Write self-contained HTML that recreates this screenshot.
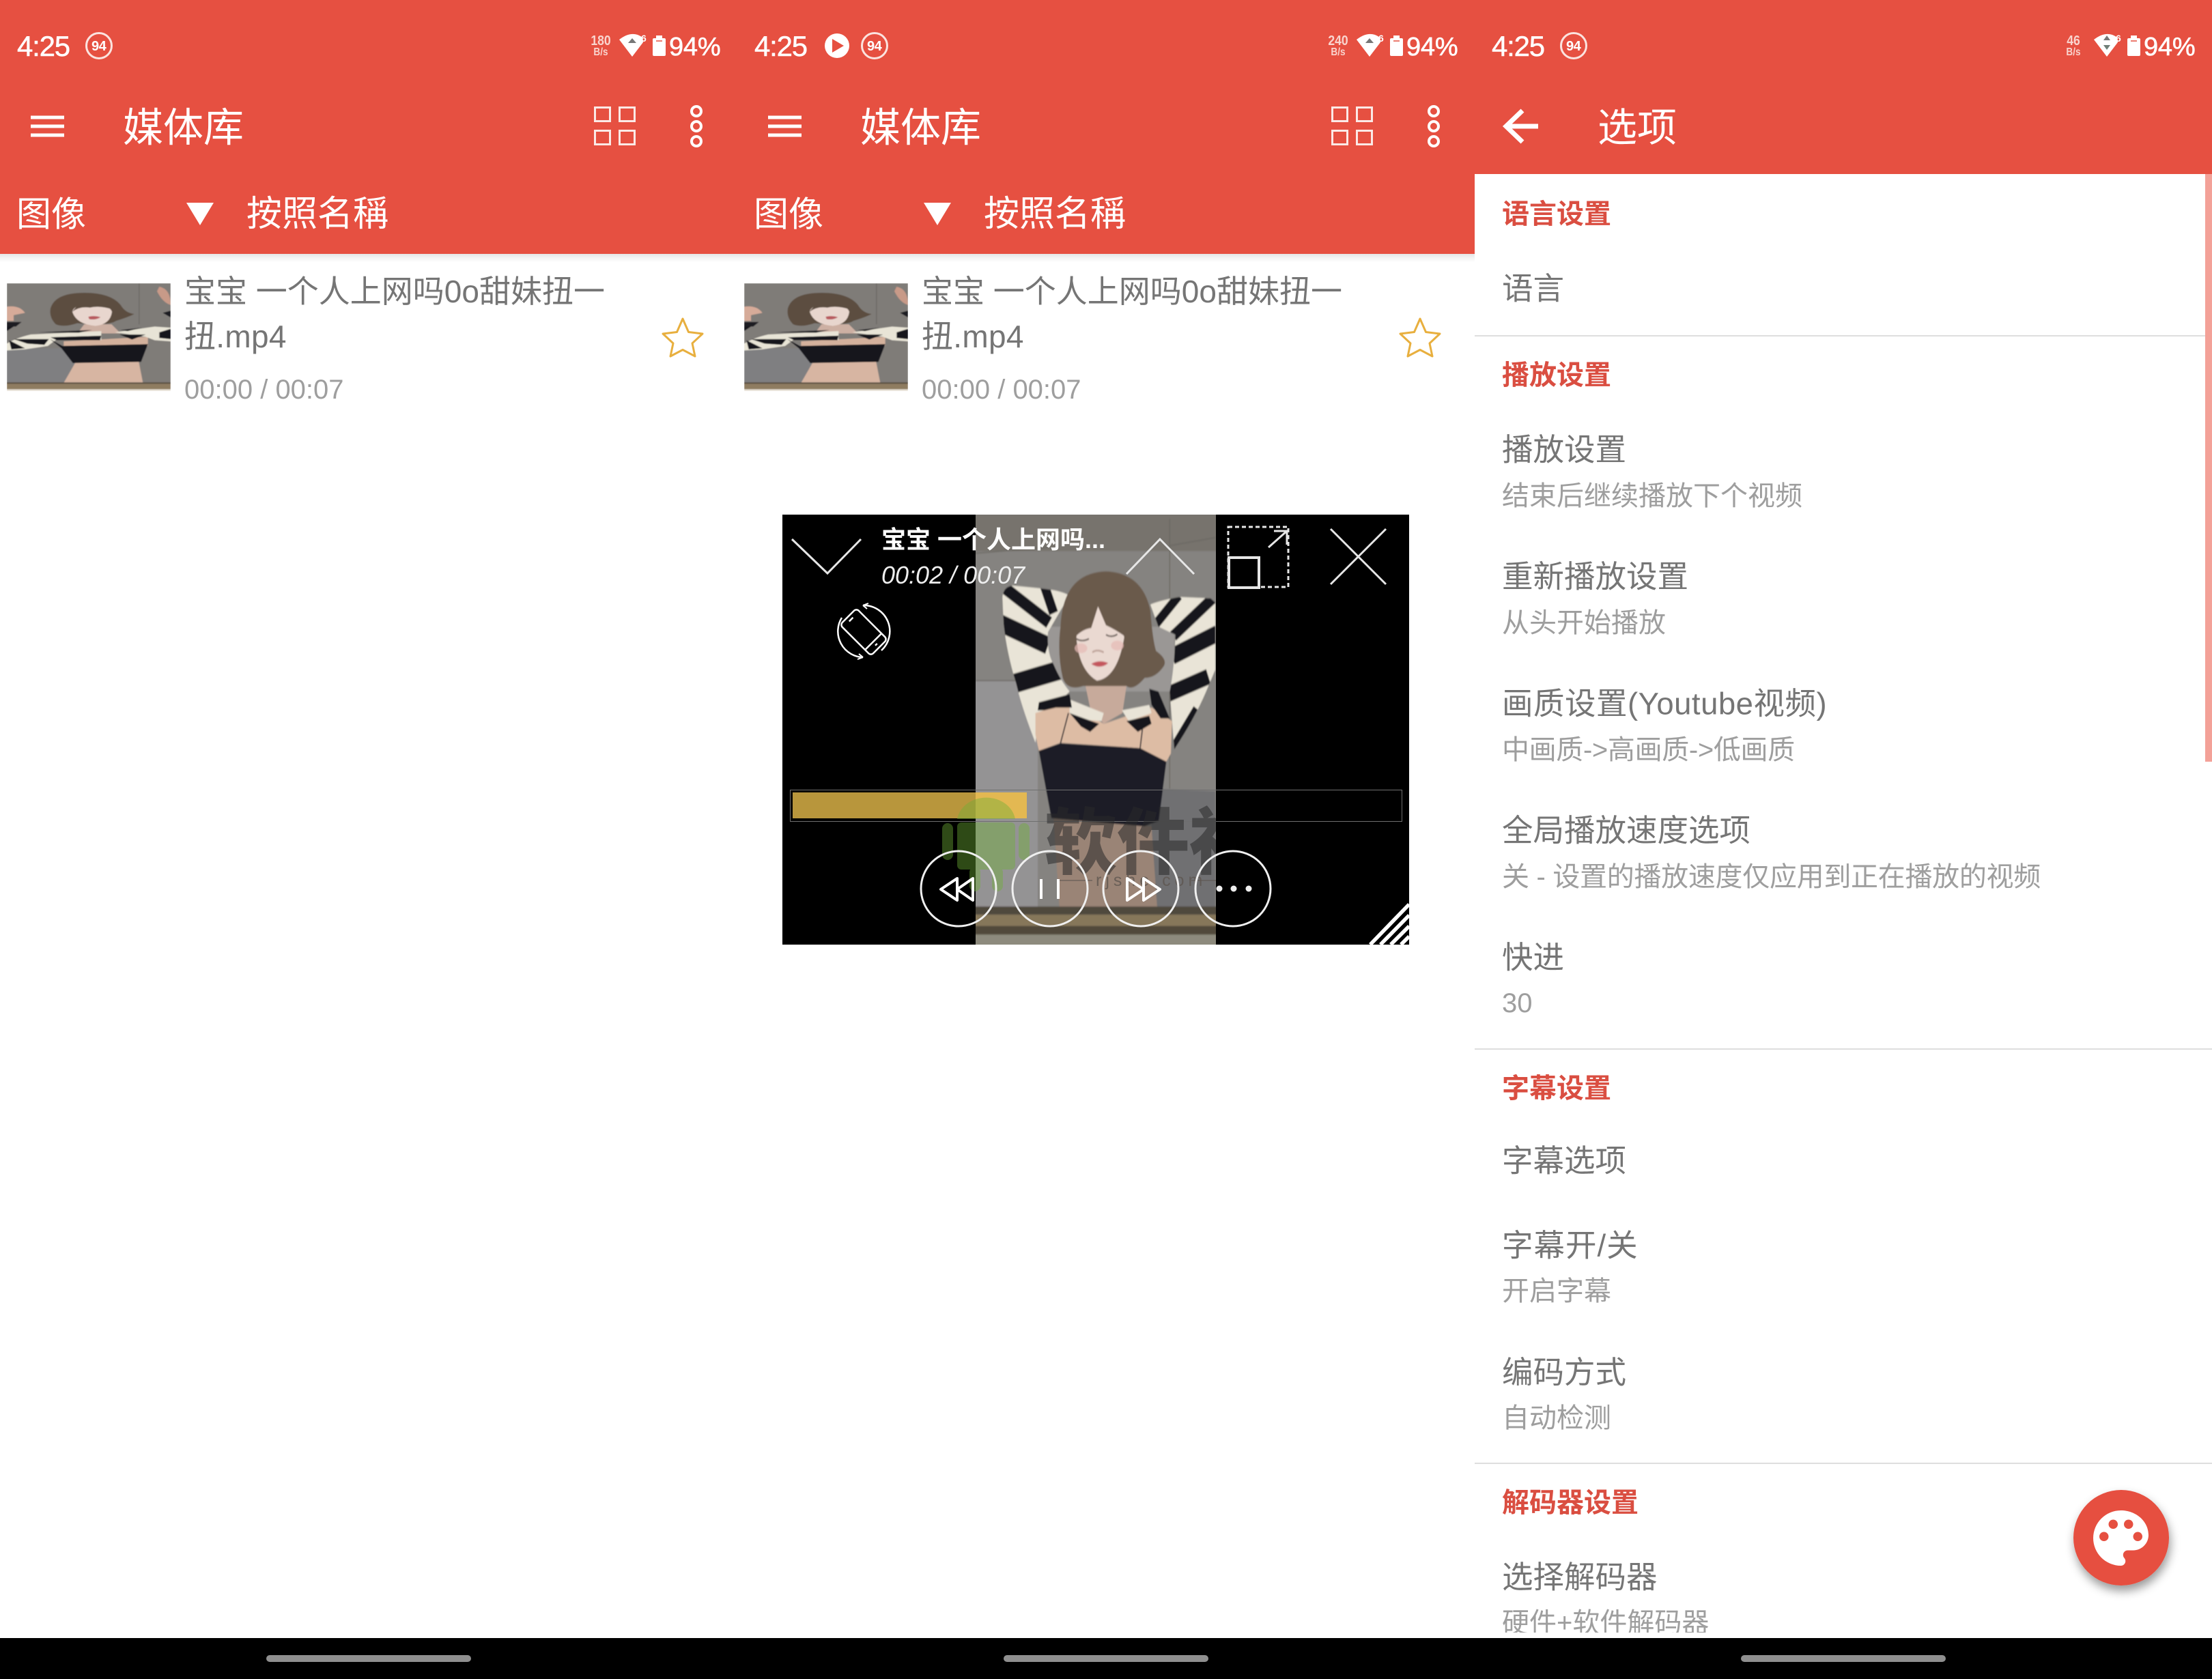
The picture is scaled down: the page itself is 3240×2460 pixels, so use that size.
<!DOCTYPE html>
<html lang="zh-CN"><head><meta charset="utf-8"><title>媒体库</title>
<style>
html,body{margin:0;padding:0;background:#fff}
#r{position:relative;width:3240px;height:2460px;overflow:hidden;background:#fff;font-family:"Liberation Sans","Noto Sans CJK SC",sans-serif}
svg{position:absolute;left:0;top:0}
.t{position:absolute;white-space:nowrap;line-height:1;transform:translateY(-50%)}
.w{color:#fff}
.bar{font-size:58px;top:188px}
.f{font-size:51px;top:314px}
.clk{font-size:42px;letter-spacing:-1.2px;top:68px;-webkit-text-stroke:.5px #fff}
.pct{font-size:38px;top:69px;-webkit-text-stroke:.6px #fff;letter-spacing:-.2px}
.sp{font-size:20px;font-weight:700;color:#f9d4ce;text-align:center;width:50px;transform:translateY(-50%) scaleX(.88)}
.u{font-size:16px;font-weight:700;color:#f9d4ce;text-align:center;width:50px;transform:translateY(-50%) scaleX(.85)}
.it{font-size:46px;color:#757575}
.tm{font-size:40px;color:#9e9e9e}
.h{font-size:40px;font-weight:700;color:#DA4E41;left:2200px;margin-top:2px}
.a{font-size:45.500px;color:#757575;left:2200px;margin-top:2px}
.b{font-size:40px;color:#9e9e9e;left:2200px;margin-top:2px}
</style></head><body><div id="r">
<svg width="3240" height="2460" viewBox="0 0 3240 2460">
<defs>
<linearGradient id="sh" x1="0" y1="0" x2="0" y2="1"><stop offset="0" stop-color="#000" stop-opacity=".1"/><stop offset="1" stop-color="#000" stop-opacity="0"/></linearGradient>
<filter id="b2"><feGaussianBlur stdDeviation="2.500"/></filter>
<filter id="fs" x="-30%" y="-30%" width="160%" height="170%"><feDropShadow dx="2" dy="8" stdDeviation="7" flood-color="#000" flood-opacity=".4"/></filter>
<clipPath id="vc"><rect x="1429" y="754" width="352" height="630"/></clipPath>
<clipPath id="armL"><path d="M145 290Q150 250 190 248L310 258Q400 265 440 285L400 340L345 420Q340 500 370 540Q400 600 440 640L300 760L290 830Q230 700 205 610Q165 500 150 390Z"/></clipPath>
<clipPath id="armR"><path d="M795 318Q830 305 920 290L1060 295L1080 310V560L1040 640Q990 740 900 855L880 640Q900 560 905 430L830 400Z"/></clipPath>
<symbol id="thumb" viewBox="30 75 720 473" overflow="hidden" preserveAspectRatio="none">
<g filter="url(#b2)">
<rect x="30" y="75" width="720" height="473" fill="#7f7c78"/>
<rect x="30" y="360" width="300" height="150" fill="#7f7f81"/>
<rect x="610" y="75" width="3" height="180" fill="#64615d"/>
<path d="M700 90Q750 100 750 170Q715 160 690 110Z" fill="#c89a88"/>
<path d="M30 178Q85 170 110 205L60 215L60 240H30Z" fill="#d6ab99"/>
<path d="M30 245H95L70 265H30ZM715 205L750 195V225Z" fill="#1d1d20"/>
<path d="M222 185Q240 125 340 118Q480 110 530 170Q550 205 590 210Q560 225 510 240Q480 262 340 250Q280 270 245 255Q215 225 222 185Z" fill="#5b4d40"/>
<path d="M370 255H490L530 295H340Z" fill="#cdb0a3"/>
<path d="M318 200Q322 170 400 165Q480 165 492 200Q485 255 420 262Q335 255 318 200Z" fill="#e8d6ce"/>
<path d="M318 200Q350 150 410 150Q470 155 495 190Q440 172 395 182Q350 175 318 200Z" fill="#5b4d40"/>
<path d="M388 222Q415 215 442 224Q420 238 392 232Z" fill="#b85a5e"/>
<path d="M280 330L650 310L650 350L280 360Z" fill="#d4b19c"/>
<path d="M30 340Q70 315 135 300L445 285V325L250 320L210 350L110 365L30 370Z" fill="#e8e4d6"/>
<path d="M505 290L680 265L750 270V330L680 325L640 310Z" fill="#e8e4d6"/>
<path d="M170 290L405 280L345 292ZM222 312L445 305L440 325L250 325ZM525 300L640 300L580 322ZM60 320L215 320L195 345L120 340ZM40 325L110 360L50 365ZM700 290L750 275V320L700 315ZM530 280L625 270L560 285ZM30 265H60L30 285Z" fill="#17171b"/>
<path d="M220 320L275 350L650 342L620 420L320 425L270 360Z" fill="#17181f"/>
<path d="M330 425L610 420L628 512H280Z" fill="#d7b5a2"/>
<rect x="30" y="510" width="720" height="6" fill="#55493a"/>
<rect x="30" y="516" width="720" height="30" fill="#8e7c60"/>
<rect x="30" y="540" width="720" height="8" fill="#e9e3d8"/>
</g></symbol>
</defs>

<!-- red headers -->
<rect x="0" y="0" width="2160" height="372" fill="#E65041"/>
<rect x="0" y="372" width="2160" height="12" fill="url(#sh)"/>
<rect x="2160" y="0" width="1080" height="255" fill="#E65041"/>

<!-- hamburger / grid / dots panels 1 & 2 -->
<g id="tb" fill="none" stroke="#fff">
<path d="M45 172H94M45 185H94M45 198H94" stroke-width="5"/>
<g stroke-width="3" stroke="#fbe9e6"><rect x="871.500" y="157.500" width="22" height="20"/><rect x="907.500" y="157.500" width="22" height="20"/><rect x="871.500" y="191.500" width="22" height="20"/><rect x="907.500" y="191.500" width="22" height="20"/></g>
<g stroke-width="4"><circle cx="1020" cy="163" r="7"/><circle cx="1020" cy="185" r="7"/><circle cx="1020" cy="207" r="7"/></g>
<path d="M273 297H313L293 330Z" fill="#fff" stroke="none"/>
</g>
<use href="#tb" x="1080"/>
<!-- back arrow -->
<path d="M2253 185H2207M2230 162L2206 185L2230 208" fill="none" stroke="#fff" stroke-width="7"/>

<!-- status icons -->
<g id="ring"><circle cx="145" cy="67" r="18.500" fill="none" stroke="#fbe3df" stroke-width="3"/></g>
<use href="#ring" x="1136"/><use href="#ring" x="2160"/>
<circle cx="1226" cy="67" r="18" fill="#fff"/><path d="M1219 57L1236 67L1219 77Z" fill="#E65041"/>
<g id="wb">
<path d="M907 58Q925 44 940 54L942 62L926 83Z" fill="#fff"/>
<rect x="956" y="56" width="19" height="26" rx="2" fill="#fff"/><rect x="961" y="52" width="9" height="5" fill="#fff"/>
<path d="M961 60H970" stroke="#E65041" stroke-width="1.500"/>
</g>
<use href="#wb" x="1080"/><use href="#wb" x="2160"/>
<path d="M926 56L932 63H920Z" fill="#777"/>
<path d="M2006 56L2012 63H2000Z" fill="#777"/>
<path d="M3086 73L3091 66H3081Z" fill="#6f7f78"/>
<path d="M3086 52L3091 59H3081Z" fill="#777"/>

<!-- thumbnails -->
<use href="#thumb" x="10" y="415" width="240" height="158"/>
<use href="#thumb" x="1090" y="415" width="240" height="158"/>
<!-- stars -->
<path id="st" d="M1000 467L1008.500 486.500L1029 489L1014 503L1018 522L1000 512.500L982 522L986 503L971 489L991.500 486.500Z" fill="none" stroke="#E8AF3E" stroke-width="3" stroke-linejoin="round"/>
<use href="#st" x="1080"/>

<!-- mini player -->
<rect x="1146" y="754" width="918" height="630" fill="#000"/>
<g clip-path="url(#vc)"><g transform="translate(1420 760) scale(.33333 .39541)"><g filter="url(#b2)">
<rect x="0" y="-20" width="1090" height="1610" fill="#858380"/>
<rect x="0" y="-20" width="1090" height="140" fill="#77736d"/>
<rect x="0" y="600" width="300" height="850" fill="#949394"/>
<path d="M880 0V1000M27 600H210M0 130L350 105M880 100L1080 70" stroke="#6a6762" stroke-width="4"/>
<path d="M800 1000L1080 1010V1440H800Z" fill="#6f6f72"/>
<rect x="330" y="400" width="570" height="240" fill="#9a9795"/>
<path d="M370 1110L800 1140L825 1440H395Z" fill="#9a8476"/>
<path d="M145 290Q150 250 190 248L310 258Q400 265 440 285L400 340L345 420Q340 500 370 540Q400 600 440 640L300 760L290 830Q230 700 205 610Q165 500 150 390Z" fill="#e9e4d7"/>
<path d="M795 318Q830 305 920 290L1060 295L1080 310V560L1040 640Q990 740 900 855L880 640Q900 560 905 430L830 400Z" fill="#e9e4d7"/>
<g fill="none" stroke="#17171a" clip-path="url(#armL)">
<path d="M130 240L350 385" stroke-width="46"/>
<path d="M130 385L345 470" stroke-width="66"/>
<path d="M180 615L400 560" stroke-width="72"/>
<path d="M330 250L370 350" stroke-width="40"/>
</g>
<g fill="none" stroke="#17171a" clip-path="url(#armR)">
<path d="M810 400L920 285" stroke-width="36"/>
<path d="M895 435L1075 290" stroke-width="42"/>
<path d="M890 510L1090 425" stroke-width="62"/>
<path d="M860 655L1050 585" stroke-width="58"/>
<path d="M890 860L1000 705" stroke-width="36"/>
</g>
<path d="M510 620H690L672 720L590 760L530 700Z" fill="#c7aa9b"/>
<path d="M290 720L440 680L590 760L800 700L890 750L885 870L865 900L750 850L400 830L305 860L290 800Z" fill="#ddbca4"/>
<path d="M305 860L400 832L750 850L865 900L832 1120L770 1140L360 1110Z" fill="#1b1e27"/>
<path d="M400 832L435 720M750 850L760 780" stroke="#20202a" stroke-width="5"/>
<path d="M400 400Q410 200 600 195Q760 200 795 340Q805 450 820 490Q870 520 855 545Q820 590 770 590Q720 640 690 620L500 620Q430 640 410 590Q385 500 400 400Z" fill="#6b5a4c"/>
<path d="M470 440Q480 560 560 600Q650 590 680 440Q660 330 565 315Q480 330 470 440Z" fill="#ead9d1"/>
<path d="M452 450Q470 320 565 305Q655 320 690 440Q640 410 600 395L565 325L535 405Q490 410 452 450Z" fill="#6b5a4c"/>
<path d="M470 445Q495 458 525 445M600 430Q625 442 650 428" stroke="#3a2e28" stroke-width="5" fill="none"/>
<path d="M540 495Q560 482 590 495" stroke="#b89a90" stroke-width="6" fill="none"/>
<path d="M535 538Q570 520 610 535Q575 560 535 538Z" fill="#c4575d"/>
<ellipse cx="490" cy="480" rx="28" ry="18" fill="#e5b9b5" opacity=".7"/><ellipse cx="650" cy="470" rx="28" ry="18" fill="#e5b9b5" opacity=".7"/>
<g fill="#e9e4d7"><path d="M440 670L590 720L580 750L510 745L440 720Z"/><path d="M670 710L790 690L800 720L700 750Z"/></g>
<g fill="#17171a"><path d="M305 680L440 650L450 700L380 700L330 710L300 710Z"/><path d="M440 720L570 760L530 790L490 770Z"/><path d="M790 630L830 640L880 740L840 740L800 690Z"/><path d="M690 750L790 730L800 760L740 790Z"/></g>
<rect x="0" y="1437" width="1090" height="30" fill="#4f483d"/>
<rect x="0" y="1467" width="1090" height="42" fill="#86775a"/>
<rect x="0" y="1509" width="1090" height="32" fill="#514a3b"/>
<rect x="0" y="1541" width="1090" height="60" fill="#8d8a7d"/>
</g></g></g>

<!-- progress -->
<rect x="1157.500" y="1157.500" width="896" height="46" fill="none" stroke="#6f6f6f" stroke-width="1"/>
<rect x="1161" y="1161" width="343" height="38" fill="#B8963C"/>
<rect x="1429" y="1161" width="75" height="38" fill="#E3B852"/>
<!-- watermark -->
<g fill="#6fb036" opacity=".42">
<path d="M1402 1200A43 37 0 0 1 1487 1200Z"/>
<rect x="1402" y="1205" width="85" height="69" rx="6"/>
<rect x="1380" y="1206" width="16" height="54" rx="8"/><rect x="1492" y="1206" width="16" height="54" rx="8"/>
<rect x="1420" y="1270" width="16" height="36" rx="8"/><rect x="1453" y="1270" width="16" height="36" rx="8"/>
</g>
<g clip-path="url(#vc)">
<text x="1530" y="1272" font-family="'Noto Sans CJK SC',sans-serif" font-size="106" font-weight="900" fill="#2a2a2a" fill-opacity=".55">软件社</text>
<text x="1605" y="1298" font-family="'Liberation Sans',sans-serif" font-size="25" letter-spacing="6" fill="#5e5650" fill-opacity=".8">rjshe.com</text>
<path d="M1550 1290H1600M1745 1290H1781" stroke="#5e5650" stroke-opacity=".7" stroke-width="1.500"/>
</g>

<!-- player controls -->
<g fill="none" stroke="#e6e6e6" stroke-width="3">
<path d="M1160 790L1212 840L1261 790"/>
<path d="M1650 841L1699 790L1749 841"/>
<rect x="1799" y="772" width="88" height="88" stroke-dasharray="6 4"/>
<rect x="1800" y="817" width="44" height="44" fill="#000" stroke-width="4"/>
<path d="M1858 802L1885 778M1866 778H1885V798"/>
<path d="M1949 775L2030 856M2030 775L1949 856"/>
<g stroke-width="2.500" stroke="#fff"><g transform="translate(1265 926) rotate(-45)"><rect x="-17" y="-32" width="34" height="64" rx="5"/><path d="M-17 20H17M-4 -26H4M-2 26H2"/></g>
<path d="M1264 887A38 38 0 0 1 1291 953M1264 963A38 38 0 0 1 1233 905"/>
<path d="M1264 887L1272 884M1264 887L1270 892M1264 963L1256 966M1264 963L1258 958" stroke-width="2"/></g>
<g stroke="#efefef"><circle cx="1404" cy="1302" r="55"/><circle cx="1538" cy="1302" r="55"/><circle cx="1671" cy="1302" r="55"/><circle cx="1806" cy="1302" r="55"/></g>
<g stroke="#fff" stroke-width="4" stroke-linejoin="round">
<path d="M1402 1287L1378 1303L1402 1319ZM1425 1287L1402 1303L1425 1319Z"/>
<path d="M1525 1288V1317M1550 1288V1317"/>
<path d="M1651 1287L1675 1303L1651 1319ZM1675 1287L1699 1303L1675 1319Z"/>
</g>
</g>
<g fill="#efefef"><circle cx="1786" cy="1302" r="4.500"/><circle cx="1807" cy="1302" r="4.500"/><circle cx="1829" cy="1302" r="4.500"/></g>
<path d="M2007 1384L2064 1325M2022 1384L2064 1341M2037 1384L2064 1357M2052 1384L2064 1372" stroke="#fff" stroke-width="5.500"/>

<!-- bottom bar -->
<rect x="0" y="2400" width="3240" height="60" fill="#000"/>
<rect x="390" y="2425" width="300" height="10" rx="5" fill="#8f8f8f"/>
<rect x="1470" y="2425" width="300" height="10" rx="5" fill="#8f8f8f"/>
<rect x="2550" y="2425" width="300" height="10" rx="5" fill="#8f8f8f"/>

<!-- prefs dividers & scrollbar -->
<rect x="2160" y="491" width="1080" height="2" fill="#dedede"/>
<rect x="2160" y="1536" width="1080" height="2" fill="#dedede"/>
<rect x="2160" y="2143" width="1080" height="2" fill="#dedede"/>
<rect x="3230" y="255" width="10" height="861" fill="#F3A198"/>
</svg>

<!-- status text -->
<div class="t w clk" style="left:25px">4:25</div>
<div class="t w clk" style="left:1105px">4:25</div>
<div class="t w clk" style="left:2185px">4:25</div>
<div class="t w" style="left:134px;top:68px;font-size:20px;font-weight:700;letter-spacing:-.5px">94</div>
<div class="t w" style="left:1270px;top:68px;font-size:20px;font-weight:700;letter-spacing:-.5px">94</div>
<div class="t w" style="left:2294px;top:68px;font-size:20px;font-weight:700;letter-spacing:-.5px">94</div>
<div class="t sp" style="left:855px;top:60px">180</div><div class="t u" style="left:855px;top:77px">B/s</div>
<div class="t sp" style="left:1935px;top:60px">240</div><div class="t u" style="left:1935px;top:77px">B/s</div>
<div class="t sp" style="left:3012px;top:60px">46</div><div class="t u" style="left:3012px;top:77px">B/s</div>
<div class="t" style="left:939px;top:56px;font-size:14px;font-weight:700;color:#fff">6</div>
<div class="t" style="left:2019px;top:56px;font-size:14px;font-weight:700;color:#fff">6</div>
<div class="t" style="left:3099px;top:56px;font-size:14px;font-weight:700;color:#fff">6</div>
<div class="t w pct" style="left:980px">94%</div>
<div class="t w pct" style="left:2060px">94%</div>
<div class="t w pct" style="left:3140px">94%</div>

<!-- app bars -->
<div class="t w bar" style="left:180px;font-size:59px">媒体库</div>
<div class="t w bar" style="left:1260px;font-size:59px">媒体库</div>
<div class="t w bar" style="left:2340px">选项</div>
<div class="t w f" style="left:24px">图像</div>
<div class="t w f" style="left:1104px">图像</div>
<div class="t w f" style="left:361px;font-size:52px">按照名稱</div>
<div class="t w f" style="left:1441px;font-size:52px">按照名稱</div>

<!-- list items -->
<div class="t it" style="left:270px;top:427px">宝宝 一个人上网吗0o甜妹扭一</div>
<div class="t it" style="left:270px;top:493px;letter-spacing:.3px">扭.mp4</div>
<div class="t tm" style="left:270px;top:571px">00:00 / 00:07</div>
<div class="t it" style="left:1350px;top:427px">宝宝 一个人上网吗0o甜妹扭一</div>
<div class="t it" style="left:1350px;top:493px;letter-spacing:.3px">扭.mp4</div>
<div class="t tm" style="left:1350px;top:571px">00:00 / 00:07</div>

<!-- player text -->
<div class="t w" style="left:1291px;top:791px;font-size:36px;font-weight:700">宝宝 一个人上网吗...</div>
<div class="t" style="left:1291px;top:843px;font-size:36px;font-style:italic;color:#eee">00:02 / 00:07</div>

<!-- prefs -->
<div class="t h" style="top:312px">语言设置</div>
<div class="t a" style="top:421px">语言</div>
<div class="t h" style="top:548px">播放设置</div>
<div class="t a" style="top:657px">播放设置</div>
<div class="t b" style="top:725px">结束后继续播放下个视频</div>
<div class="t a" style="top:843px">重新播放设置</div>
<div class="t b" style="top:911px">从头开始播放</div>
<div class="t a" style="top:1029px;letter-spacing:.5px">画质设置(Youtube视频)</div>
<div class="t b" style="top:1097px;letter-spacing:-.35px">中画质-&gt;高画质-&gt;低画质</div>
<div class="t a" style="top:1215px">全局播放速度选项</div>
<div class="t b" style="top:1283px;letter-spacing:-.3px">关 - 设置的播放速度仅应用到正在播放的视频</div>
<div class="t a" style="top:1401px">快进</div>
<div class="t b" style="top:1468px">30</div>
<div class="t h" style="top:1593px">字幕设置</div>
<div class="t a" style="top:1699px">字幕选项</div>
<div class="t a" style="top:1823px;letter-spacing:1px">字幕开/关</div>
<div class="t b" style="top:1890px">开启字幕</div>
<div class="t a" style="top:2009px">编码方式</div>
<div class="t b" style="top:2076px">自动检测</div>
<div class="t h" style="top:2200px">解码器设置</div>
<div class="t a" style="top:2309px">选择解码器</div>
<div class="t b" style="top:2376px">硬件+软件解码器</div>
<div style="position:absolute;left:2160px;top:2392px;width:1080px;height:8px;background:#fff"></div>

<!-- FAB -->
<svg width="3240" height="2460" viewBox="0 0 3240 2460">
<circle cx="3107" cy="2253" r="70" fill="#E65041" filter="url(#fs)"/>
<g transform="translate(3052.500 2199.500) scale(4.500)">
<path d="M12 3a9 9 0 0 0 0 18c.83 0 1.500-.67 1.500-1.500 0-.39-.15-.74-.39-1.010-.23-.26-.38-.61-.38-.99 0-.83.67-1.500 1.500-1.500H16c2.760 0 5-2.240 5-5 0-4.420-4.030-8-9-8z" fill="#fff"/>
<g fill="#E65041"><circle cx="6.500" cy="11.500" r="1.500"/><circle cx="9.500" cy="7.500" r="1.500"/><circle cx="14.500" cy="7.500" r="1.500"/><circle cx="17.500" cy="11.500" r="1.500"/></g>
</g>
</svg>
</div></body></html>
